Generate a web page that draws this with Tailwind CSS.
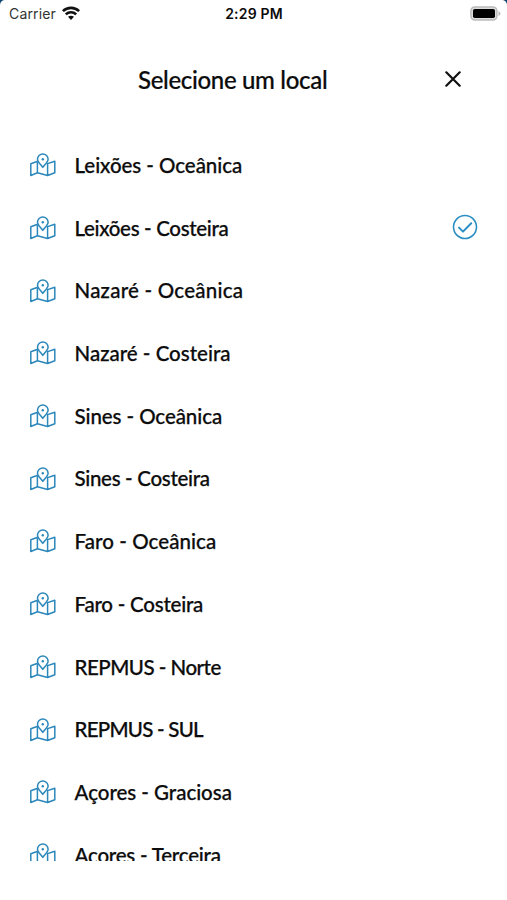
<!DOCTYPE html>
<html lang="pt">
<head>
<meta charset="utf-8">
<title>Selecione um local</title>
<script src="https://cdn.jsdelivr.net/npm/@tailwindcss/browser@4"></script>
</head>
<body class="bg-[#0d4672]">
<svg class="hidden">
  <symbol id="map" viewBox="0 0 26 24">
    <g fill="none" stroke="#2c87ba" stroke-width="1.5" stroke-linejoin="round" stroke-linecap="round">
      <path d="M7 8.5 .8 10.8V22.5L7.4 19.7 17.6 22.5 24.8 19.7V8.2L17.6 10.6M7.4 9V19.7M17.6 10.6V22.5"/>
      <path d="M12.8 14.4C11 11.7 7.5 9 7.5 6.2A5.3 5.3 0 0 1 18.1 6.2C18.1 9 14.6 11.7 12.8 14.4Z"/>
    </g>
    <circle cx="12.8" cy="6.2" r="1.2" fill="#2c87ba"/>
  </symbol>
</svg>
<div class="w-[507px] h-[900px] bg-white rounded-t-[5px] overflow-hidden flex flex-col text-[#0c0c0c] font-['Lato',sans-serif]">
  <div class="h-7 shrink-0 grid grid-cols-3 items-center pl-[9px] pr-[6px] font-['Inter',sans-serif] text-[14px] leading-7">
    <div class="flex items-center gap-[6px] text-[#333]"><span class="tracking-[0.15px]">Carrier</span>
      <svg class="w-[18px] h-[14px] -mt-[2px]" viewBox="0 0 18 14" fill="none" stroke="#111" stroke-width="2.6"><path d="M.9 5.2C5.4.7 12.6.7 17.1 5.2M3.8 8.4C6.7 5.6 11.3 5.6 14.2 8.4"/><path d="M6 10.8Q9 8.5 12 10.8L9 13.9Z" fill="#111" stroke="none"/></svg>
    </div>
    <div class="text-center font-semibold text-[14px] tracking-[0.2px] whitespace-nowrap pr-[2px]"><span>2:29 PM</span></div>
    <div class="flex justify-end"><svg class="w-[31px] h-[15px] -mt-[2px]" viewBox="0 0 31 15"><rect x=".9" y=".9" width="26" height="13.2" rx="4" fill="#ddd" stroke="#bbb" stroke-width="1.5"/><rect x="3" y="3" width="22" height="9" rx="1.8" fill="#000"/><path d="M28.5 5v5Q30.5 9 30.5 7.5T28.5 5Z" fill="#bbb"/></svg></div>
  </div>
  <div class="h-[105.8px] shrink-0 flex items-start pt-[35px]">
    <h1 class="ml-[138px] w-[307px] text-[24px] leading-[33px] font-medium tracking-[-0.33px] whitespace-nowrap [-webkit-text-stroke:0.2px]"><span>Selecione um local</span></h1>
    <svg class="mt-[8px] w-4 h-4" viewBox="0 0 16 16" stroke="#111" stroke-width="2.2" stroke-linecap="round"><path d="m1.3 1.3 13.4 13.4m0-13.4L1.3 14.7"/></svg>
  </div>
  <ul class="h-[727.2px] shrink-0 overflow-hidden text-[20.5px] font-medium whitespace-nowrap [-webkit-text-stroke:0.25px] *:h-[62.72px] *:flex *:items-center *:gap-[19px] *:pl-[29.5px] *:pr-[29px]">
    <li><svg class="w-[26px] h-6 shrink-0"><use href="#map"/></svg><span class="tracking-[-0.05px]">Leixões - Oceânica</span></li>
    <li><svg class="w-[26px] h-6 shrink-0"><use href="#map"/></svg><span class="tracking-[-0.33px]">Leixões - Costeira</span><svg class="ml-auto w-[26px] h-[26px] -mt-[1px]" viewBox="0 0 26 26" fill="none" stroke="#2c8fc4" stroke-width="1.6" stroke-linecap="round" stroke-linejoin="round"><circle cx="13" cy="13" r="11.5"/><path stroke-width="2" d="m7 13.6 4 4 8.2-8.4"/></svg></li>
    <li><svg class="w-[26px] h-6 shrink-0"><use href="#map"/></svg><span class="tracking-[0.24px]">Nazaré - Oceânica</span></li>
    <li><svg class="w-[26px] h-6 shrink-0"><use href="#map"/></svg><span>Nazaré - Costeira</span></li>
    <li><svg class="w-[26px] h-6 shrink-0"><use href="#map"/></svg><span class="tracking-[-0.08px]">Sines - Oceânica</span></li>
    <li><svg class="w-[26px] h-6 shrink-0"><use href="#map"/></svg><span class="tracking-[-0.31px]">Sines - Costeira</span></li>
    <li><svg class="w-[26px] h-6 shrink-0"><use href="#map"/></svg><span class="tracking-[0.07px]">Faro - Oceânica</span></li>
    <li><svg class="w-[26px] h-6 shrink-0"><use href="#map"/></svg><span class="tracking-[-0.23px]">Faro - Costeira</span></li>
    <li><svg class="w-[26px] h-6 shrink-0"><use href="#map"/></svg><span class="tracking-[-0.5px]">REPMUS - Norte</span></li>
    <li><svg class="w-[26px] h-6 shrink-0"><use href="#map"/></svg><span class="tracking-[-0.75px]">REPMUS - SUL</span></li>
    <li><svg class="w-[26px] h-6 shrink-0"><use href="#map"/></svg><span class="tracking-[-0.03px]">Açores - Graciosa</span></li>
    <li><svg class="w-[26px] h-6 shrink-0"><use href="#map"/></svg><span class="tracking-[-0.22px]">Açores - Terceira</span></li>
  </ul>
</div>
</body>
</html>
